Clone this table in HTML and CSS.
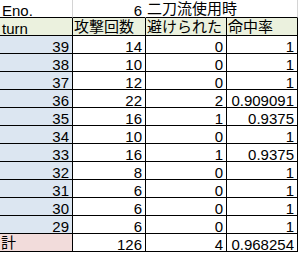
FILE: index.html
```html
<!DOCTYPE html>
<html lang="ja">
<head>
<meta charset="utf-8">
<link rel="stylesheet" href="styles.css">
</head>
<body>
<div class="sheet">
  <div class="c top colA">Eno.</div>
  <div class="c top num">6</div>
  <div class="c top jp title">二刀流使用時</div>

  <div class="c hd">turn</div>
  <div class="c hd jp">攻撃回数</div>
  <div class="c hd jp">避けられた</div>
  <div class="c hd jp">命中率</div>

  <div class="c key num">39</div><div class="c num">14</div><div class="c num">0</div><div class="c num">1</div>
  <div class="c key num">38</div><div class="c num">10</div><div class="c num">0</div><div class="c num">1</div>
  <div class="c key num">37</div><div class="c num">12</div><div class="c num">0</div><div class="c num">1</div>
  <div class="c key num">36</div><div class="c num">22</div><div class="c num">2</div><div class="c num">0.909091</div>
  <div class="c key num">35</div><div class="c num">16</div><div class="c num">1</div><div class="c num">0.9375</div>
  <div class="c key num">34</div><div class="c num">10</div><div class="c num">0</div><div class="c num">1</div>
  <div class="c key num">33</div><div class="c num">16</div><div class="c num">1</div><div class="c num">0.9375</div>
  <div class="c key num">32</div><div class="c num">8</div><div class="c num">0</div><div class="c num">1</div>
  <div class="c key num">31</div><div class="c num">6</div><div class="c num">0</div><div class="c num">1</div>
  <div class="c key num">30</div><div class="c num">6</div><div class="c num">0</div><div class="c num">1</div>
  <div class="c key num">29</div><div class="c num">6</div><div class="c num">0</div><div class="c num">1</div>

  <div class="c total jp">計</div><div class="c num">126</div><div class="c num">4</div><div class="c num">0.968254</div>
</div>
</body>
</html>
```

FILE: styles.css
```css
html, body {
  margin: 0;
  padding: 0;
  background: #ffffff;
}

.sheet {
  display: grid;
  grid-template-columns: 73px 73px 81px 71px;
  grid-auto-rows: 18px;
  width: 298px;
}

.c {
  box-sizing: border-box;
  height: 18px;
  border-right: 1px solid #000000;
  border-bottom: 1px solid #000000;
  padding: 3px 3px 0 2px;
  font-family: "Liberation Sans", "Noto Sans CJK JP", sans-serif;
  font-size: 15px;
  line-height: 15px;
  color: #000000;
  white-space: nowrap;
}

.jp {
  font-family: "Noto Sans CJK JP", "Liberation Sans", sans-serif;
  padding-top: 0;
  padding-left: 1px;
}

.num {
  text-align: right;
}

.top {
  border-right-color: transparent;
}

.top.colA,
.top.title {
  border-right-color: #d4d4d4;
}

.title {
  grid-column: span 2;
}

.hd {
  background: #ebf1de;
}

.key {
  background: #dce6f1;
}

.total {
  background: #f2dcdb;
}
```
